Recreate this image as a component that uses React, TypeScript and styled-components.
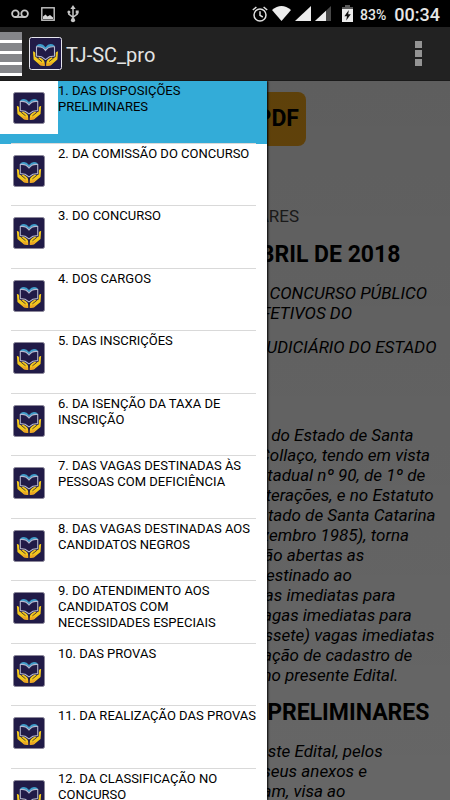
import React from "react";
import styled, { createGlobalStyle } from "styled-components";

const GlobalStyle = createGlobalStyle`
  *, *::before, *::after { box-sizing: border-box; }
  html, body, #root { height: 100%; }
  body {
    margin: 0;
    background: #000;
    color: #000;
    font-family: Roboto, "Liberation Sans", sans-serif;
  }
  button { font: inherit; color: inherit; border: 0; padding: 0; background: none; cursor: pointer; }
`;

const Screen = styled.div`
  display: flex;
  flex-direction: column;
  height: 100vh;
  overflow: hidden;
`;

const StatusBar = styled.header`
  display: flex;
  align-items: center;
  justify-content: space-between;
  height: 27px;
  flex: none;
  padding: 0 10px 0 11px;
  background: #000;
  color: #e6e6e6;
`;

const StatusGroup = styled.div<{ $gap: number }>`
  display: flex;
  align-items: center;
  gap: ${(p) => p.$gap}px;
  svg { display: block; flex: none; }
`;

const Battery = styled.span`
  display: flex;
  align-items: center;
  gap: 7px;
  padding: 0 4px 0 7px;
  font-size: 14px;
  font-weight: 500;
  line-height: 20px;
`;

const Percent = styled.span`
  padding-top: 3px;
`;

const Clock = styled.time`
  font-size: 18px;
  font-weight: 500;
  line-height: 20px;
  padding-top: 3px;
`;

const ActionBar = styled.div`
  display: flex;
  align-items: center;
  flex: none;
  height: 54px;
  background: #222;
  border-bottom: 1px solid #1a1a1a;
  color: #e4e4e4;
`;

const MenuButton = styled.button`
  display: grid;
  grid-template-rows: repeat(4, 8px);
  row-gap: 3px;
  width: 22px;
  padding-bottom: 3px;
  margin-right: 7px;
  background: #fff;
`;

const MenuBar = styled.span`
  background: #85868a;
`;

const Title = styled.h1`
  flex: 1;
  margin: 0;
  padding: 2px 0 0 4px;
  font-size: 20px;
  line-height: 24px;
  font-weight: 400;
`;

const OverflowButton = styled.button`
  display: grid;
  gap: 2px;
  padding: 8px;
  margin-right: 20px;
`;

const OverflowDot = styled.span`
  width: 7px;
  height: 7px;
  background: #949494;
`;

const Body = styled.div`
  position: relative;
  flex: 1;
  min-height: 0;
  overflow: hidden;
  background: #fff;
`;

const Article = styled.main`
  padding: 11px 7px 0;
  font-size: 17px;
  line-height: 20px;
  white-space: nowrap;
`;

const PdfButton = styled.button`
  display: block;
  width: 162px;
  height: 54px;
  margin-left: 137px;
  padding-right: 7px;
  border-radius: 8px;
  background: #ffaf1c;
  font-size: 23px;
  font-weight: 700;
  text-align: right;
`;

const Crumb = styled.p`
  margin: 60px 0 1px;
  color: #444;
`;

const Heading = styled.h2`
  margin: 0;
  padding: 14px 0;
  font-size: 23px;
  line-height: 28px;
  font-weight: 700;
`;

const Paragraph = styled.p<{ $after: number }>`
  margin: 0 0 ${(p) => p.$after}px;
  font-style: italic;
  white-space: pre;
`;

const Scrim = styled.div`
  position: absolute;
  inset: 0;
  background: linear-gradient(rgba(0, 0, 0, 0.63), rgba(0, 0, 0, 0.6));
`;

const Drawer = styled.nav`
  position: absolute;
  top: 0;
  bottom: 0;
  left: 0;
  width: 267px;
  overflow: hidden;
  background: #fff;
  box-shadow: 1px 0 2px #000;
`;

const DrawerList = styled.ul`
  display: grid;
  grid-template-rows: repeat(12, 1fr);
  height: 750px;
  margin: 0;
  padding: 0;
  list-style: none;
`;

const DrawerRow = styled.li`
  position: relative;
  &::after {
    content: "";
    position: absolute;
    left: 11px;
    right: 11px;
    bottom: 0;
    height: 1px;
    background: #d9d9d9;
  }
`;

const DrawerItem = styled.button<{ $selected?: boolean }>`
  display: flex;
  align-items: flex-start;
  width: 100%;
  height: 100%;
  background: ${(p) => (p.$selected ? "#33acd8" : "#fff")};
  font-size: 13px;
  line-height: 16px;
  text-align: left;
`;

const IconCell = styled.span`
  display: grid;
  place-items: center;
  flex: none;
  width: 58px;
  height: 53px;
  padding-top: 1px;
  background: #fff;
`;

const Label = styled.span`
  flex: 1;
  padding: 2px 5px 0 0;
`;

function Logo({ size, outline }: { size: number; outline: string }) {
  return (
    <svg width={size} height={size} viewBox="0 0 33 33" aria-hidden="true">
      <rect x="0.5" y="0.5" width="32" height="32" rx="2" fill="#211b47" stroke={outline} />
      <path d="M7.5 8.5Q12.5 5 16.5 10.2Q20.5 5 25.5 8.5L25 10Q20 8.5 16.5 13Q13 8.5 8 10Z" fill="#3d9cc9" />
      <path
        d="M7.5 9.8V19L12.5 19.8L16.5 22.6L20.5 19.8L25.5 19V9.8Q19.5 9 16.5 13.4Q13.5 9 7.5 9.8Z"
        fill="#211b47"
        stroke="#b5b9d0"
        strokeWidth="1.1"
      />
      <path d="M4 14.5Q5.8 14 6.3 16V19.8L9 21.4L10.2 20.2Q15.6 22.6 15.6 25.6V29L11.2 28.2L4.6 22.6Z" fill="#f2c81c" />
      <path d="M29 14.5Q27.2 14 26.7 16V19.8L24 21.4L22.8 20.2Q17.4 22.6 17.4 25.6V29L21.8 28.2L28.4 22.6Z" fill="#f2c81c" />
      <path d="M9 25L15.6 26.6V29L11.2 28.2ZM24 25L17.4 26.6V29L21.8 28.2Z" fill="#eda525" />
      <path d="M8.6 21.2L13 24.6M24.4 21.2L20 24.6" stroke="#3a2c3c" strokeWidth="0.9" />
    </svg>
  );
}

const VoicemailIcon = () => (
  <svg width="18" height="10" viewBox="0 0 18 10" fill="none" stroke="#c6c6c6" strokeWidth="1.8">
    <circle cx="4.4" cy="4.7" r="3.3" />
    <circle cx="13.6" cy="4.7" r="3.3" />
    <path d="M4.4 8H13.6" />
  </svg>
);

const PictureIcon = () => (
  <svg width="14" height="14" viewBox="0 0 14 14">
    <rect x="0.8" y="0.8" width="12.4" height="12.4" fill="none" stroke="#c6c6c6" strokeWidth="1.4" />
    <path d="M2 12V9.5L4.5 7.5L6.5 9.5L9 8L12 10.5V12Z" fill="#d6d6d6" />
  </svg>
);

const UsbIcon = () => (
  <svg width="12" height="18" viewBox="0 0 12 18" fill="none" stroke="#c6c6c6" strokeWidth="1.5">
    <path d="M6 3V14M1.8 7V9.2L6 12.3L10.2 9.2V7" />
    <path d="M6 0L8.6 4H3.4Z" fill="#c6c6c6" stroke="none" />
    <circle cx="6" cy="15.2" r="2.1" fill="#c6c6c6" stroke="none" />
    <circle cx="1.9" cy="7" r="1.5" fill="#c6c6c6" stroke="none" />
    <path d="M8.7 5.5H11.7V8.5H8.7Z" fill="#c6c6c6" stroke="none" />
  </svg>
);

const AlarmIcon = () => (
  <svg width="16" height="16" viewBox="0 0 16 16" fill="none" stroke="#e0e0e0" strokeWidth="1.5">
    <circle cx="8" cy="9" r="6" />
    <path d="M8 5.3V9.3L10.8 11M0.8 4L4.4 1M15.2 4L11.6 1" />
  </svg>
);

const WifiIcon = () => (
  <svg width="19" height="15" viewBox="0 0 19 15">
    <path d="M0 4Q9.5 -4 19 4L9.5 15Z" fill="#ececec" />
  </svg>
);

const SignalIcon = ({ weak }: { weak?: boolean }) => (
  <svg width="16" height="15" viewBox="0 0 16 15">
    <path d="M16 0V15H0Z" fill={weak ? "#484848" : "#ececec"} />
    {weak && <path d="M11 4.7V15H0Z" fill="#ececec" />}
  </svg>
);

const BatteryIcon = () => (
  <svg width="11" height="17" viewBox="0 0 11 17">
    <path d="M3 0H8V2H11V5H0V2H3Z" fill="#5a5a5a" />
    <path d="M0 4H11V17H0Z" fill="#ececec" />
    <path d="M6.8 5L2.4 11.2H5L4.2 15.6L8.8 9.2H6.2Z" fill="#111" />
  </svg>
);

const SECTIONS = [
  "1. DAS DISPOSIÇÕES PRELIMINARES",
  "2. DA COMISSÃO DO CONCURSO",
  "3. DO CONCURSO",
  "4. DOS CARGOS",
  "5. DAS INSCRIÇÕES",
  "6. DA ISENÇÃO DA TAXA DE INSCRIÇÃO",
  "7. DAS VAGAS DESTINADAS ÀS PESSOAS COM DEFICIÊNCIA",
  "8. DAS VAGAS DESTINADAS AOS CANDIDATOS NEGROS",
  "9. DO ATENDIMENTO AOS CANDIDATOS COM NECESSIDADES ESPECIAIS",
  "10. DAS PROVAS",
  "11. DA REALIZAÇÃO DAS PROVAS",
  "12. DA CLASSIFICAÇÃO NO CONCURSO",
];

const INTRO = [
  "O Presidente do Tribunal de Justiça do Estado de Santa",
  "Catarina, Desembargador Rodrigo Collaço, tendo em vista",
  "o disposto na Lei Complementar Estadual nº 90, de 1º de",
  "julho de 1993, e suas posteriores alterações, e no Estatuto",
  "dos Servidores Públicos Civis do Estado de Santa Catarina",
  "(Lei Estadual nº 6.745, de 28 de dezembro 1985), torna",
  "público para conhecimento que estão abertas as",
  "inscrições, para concurso público destinado ao",
  "preenchimento das 15 (quinze) vagas imediatas para",
  "Analista Jurídico, e mais 10 (dez) vagas imediatas para",
  "Técnico Judiciário, e mais 17 (dezessete) vagas imediatas",
  "para os demais cargos e para formação de cadastro de",
  "reserva, tudo conforme o disposto no presente Edital.",
].join("\n");

const SECTION_ONE = [
  "1.1. O concurso será regulado por este Edital, pelos",
  "diplomas legais mencionados, por seus anexos e",
  "demais normas que o complementam, visa ao",
].join("\n");

export default function App() {
  return (
    <Screen>
      <GlobalStyle />
      <StatusBar>
        <StatusGroup $gap={12}>
          <VoicemailIcon />
          <PictureIcon />
          <UsbIcon />
        </StatusGroup>
        <StatusGroup $gap={4}>
          <AlarmIcon />
          <WifiIcon />
          <SignalIcon />
          <SignalIcon weak />
          <Battery>
            <BatteryIcon />
            <Percent>83%</Percent>
          </Battery>
          <Clock>00:34</Clock>
        </StatusGroup>
      </StatusBar>

      <ActionBar>
        <MenuButton aria-label="Menu">
          <MenuBar />
          <MenuBar />
          <MenuBar />
          <MenuBar />
        </MenuButton>
        <Logo size={33} outline="#e6e6ee" />
        <Title>TJ-SC_pro</Title>
        <OverflowButton aria-label="Mais opções">
          <OverflowDot />
          <OverflowDot />
          <OverflowDot />
        </OverflowButton>
      </ActionBar>

      <Body>
        <Article>
          <PdfButton>Baixar PDF</PdfButton>
          <Crumb>• 1. DAS DISPOSIÇÕES PRELIMINARES</Crumb>
          <Heading>EDITAL Nº 13, DE 2 DE ABRIL DE 2018</Heading>
          <Paragraph $after={14}>{"DISPÕE ACERCA DA ABERTURA DE CONCURSO PÚBLICO\nPARA PROVIMENTO DE CARGOS EFETIVOS DO"}</Paragraph>
          <Paragraph $after={68}>{"QUADRO DE PESSOAL DO PODER JUDICIÁRIO DO ESTADO"}</Paragraph>
          <Paragraph $after={0}>{INTRO}</Paragraph>
          <Heading>01. – DAS DISPOSIÇÕES PRELIMINARES</Heading>
          <Paragraph $after={0}>{SECTION_ONE}</Paragraph>
        </Article>
        <Scrim />
        <Drawer aria-label="Seções">
          <DrawerList>
            {SECTIONS.map((name, i) => (
              <DrawerRow key={name}>
                <DrawerItem $selected={i === 0} aria-current={i === 0 ? "true" : undefined}>
                  <IconCell>
                    <Logo size={32} outline="#8b8799" />
                  </IconCell>
                  <Label>{name}</Label>
                </DrawerItem>
              </DrawerRow>
            ))}
          </DrawerList>
        </Drawer>
      </Body>
    </Screen>
  );
}
